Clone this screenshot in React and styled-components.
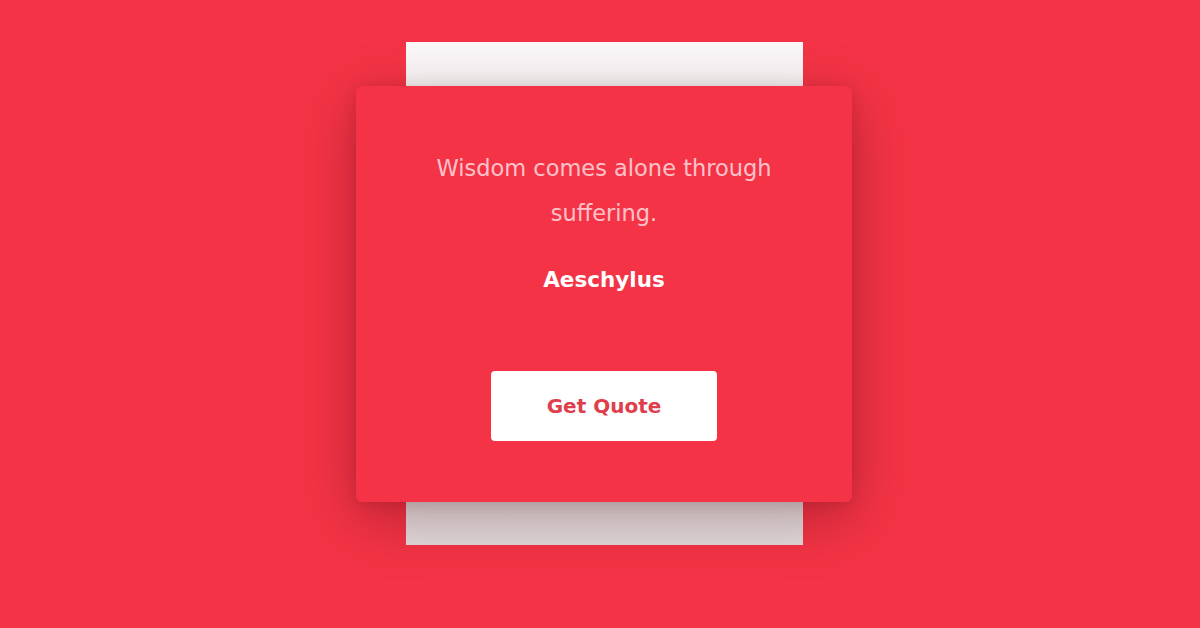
import React from 'react';
import styled, { createGlobalStyle } from 'styled-components';

const GlobalStyle = createGlobalStyle`
  html, body {
    margin: 0;
    padding: 0;
    background: #f43446;
  }
  body {
    font-family: 'DejaVu Sans', 'Open Sans', sans-serif;
    -webkit-font-smoothing: antialiased;
  }
`;

const Stage = styled.div`
  height: 628px;
  padding-left: 8px;
  box-sizing: border-box;
  display: grid;
  place-items: center;
  overflow: hidden;
`;

// the pale sheet peeking out above and below the card
const Sheet = styled.div`
  grid-area: 1 / 1;
  width: 397px;
  height: 503px;
  margin-top: -41px;
  background: linear-gradient(#fbf8f9, #e4dcdd);
`;

const Card = styled.div`
  grid-area: 1 / 1;
  width: 496px;
  height: 416px;
  margin-top: -40px;
  box-sizing: border-box;
  padding: 60px 50px 0;
  background: #f43446;
  border-radius: 6px;
  box-shadow: 0 16px 60px rgba(60, 0, 10, 0.32), 0 2px 14px rgba(60, 0, 10, 0.12);
  display: flex;
  flex-direction: column;
  align-items: center;
  text-align: center;
`;

const Quote = styled.p`
  margin: 0;
  max-width: 370px;
  font-size: 22.5px;
  line-height: 45px;
  color: rgba(255, 226, 230, 0.84);
  font-weight: 400;
`;

const Author = styled.h3`
  margin: 29px 0 0;
  font-size: 21.5px;
  line-height: 30px;
  font-weight: 700;
  color: #ffffff;
`;

const Button = styled.button`
  margin-top: 76px;
  width: 226px;
  height: 70px;
  border: none;
  border-radius: 4px;
  background: #ffffff;
  color: #e03e4c;
  font-family: inherit;
  font-size: 20px;
  font-weight: 600;
  cursor: pointer;
`;

export default function App() {
  return (
    <>
      <GlobalStyle />
      <Stage>
        <Sheet />
        <Card>
          <Quote>Wisdom comes alone through suffering.</Quote>
          <Author>Aeschylus</Author>
          <Button>Get Quote</Button>
        </Card>
      </Stage>
    </>
  );
}
